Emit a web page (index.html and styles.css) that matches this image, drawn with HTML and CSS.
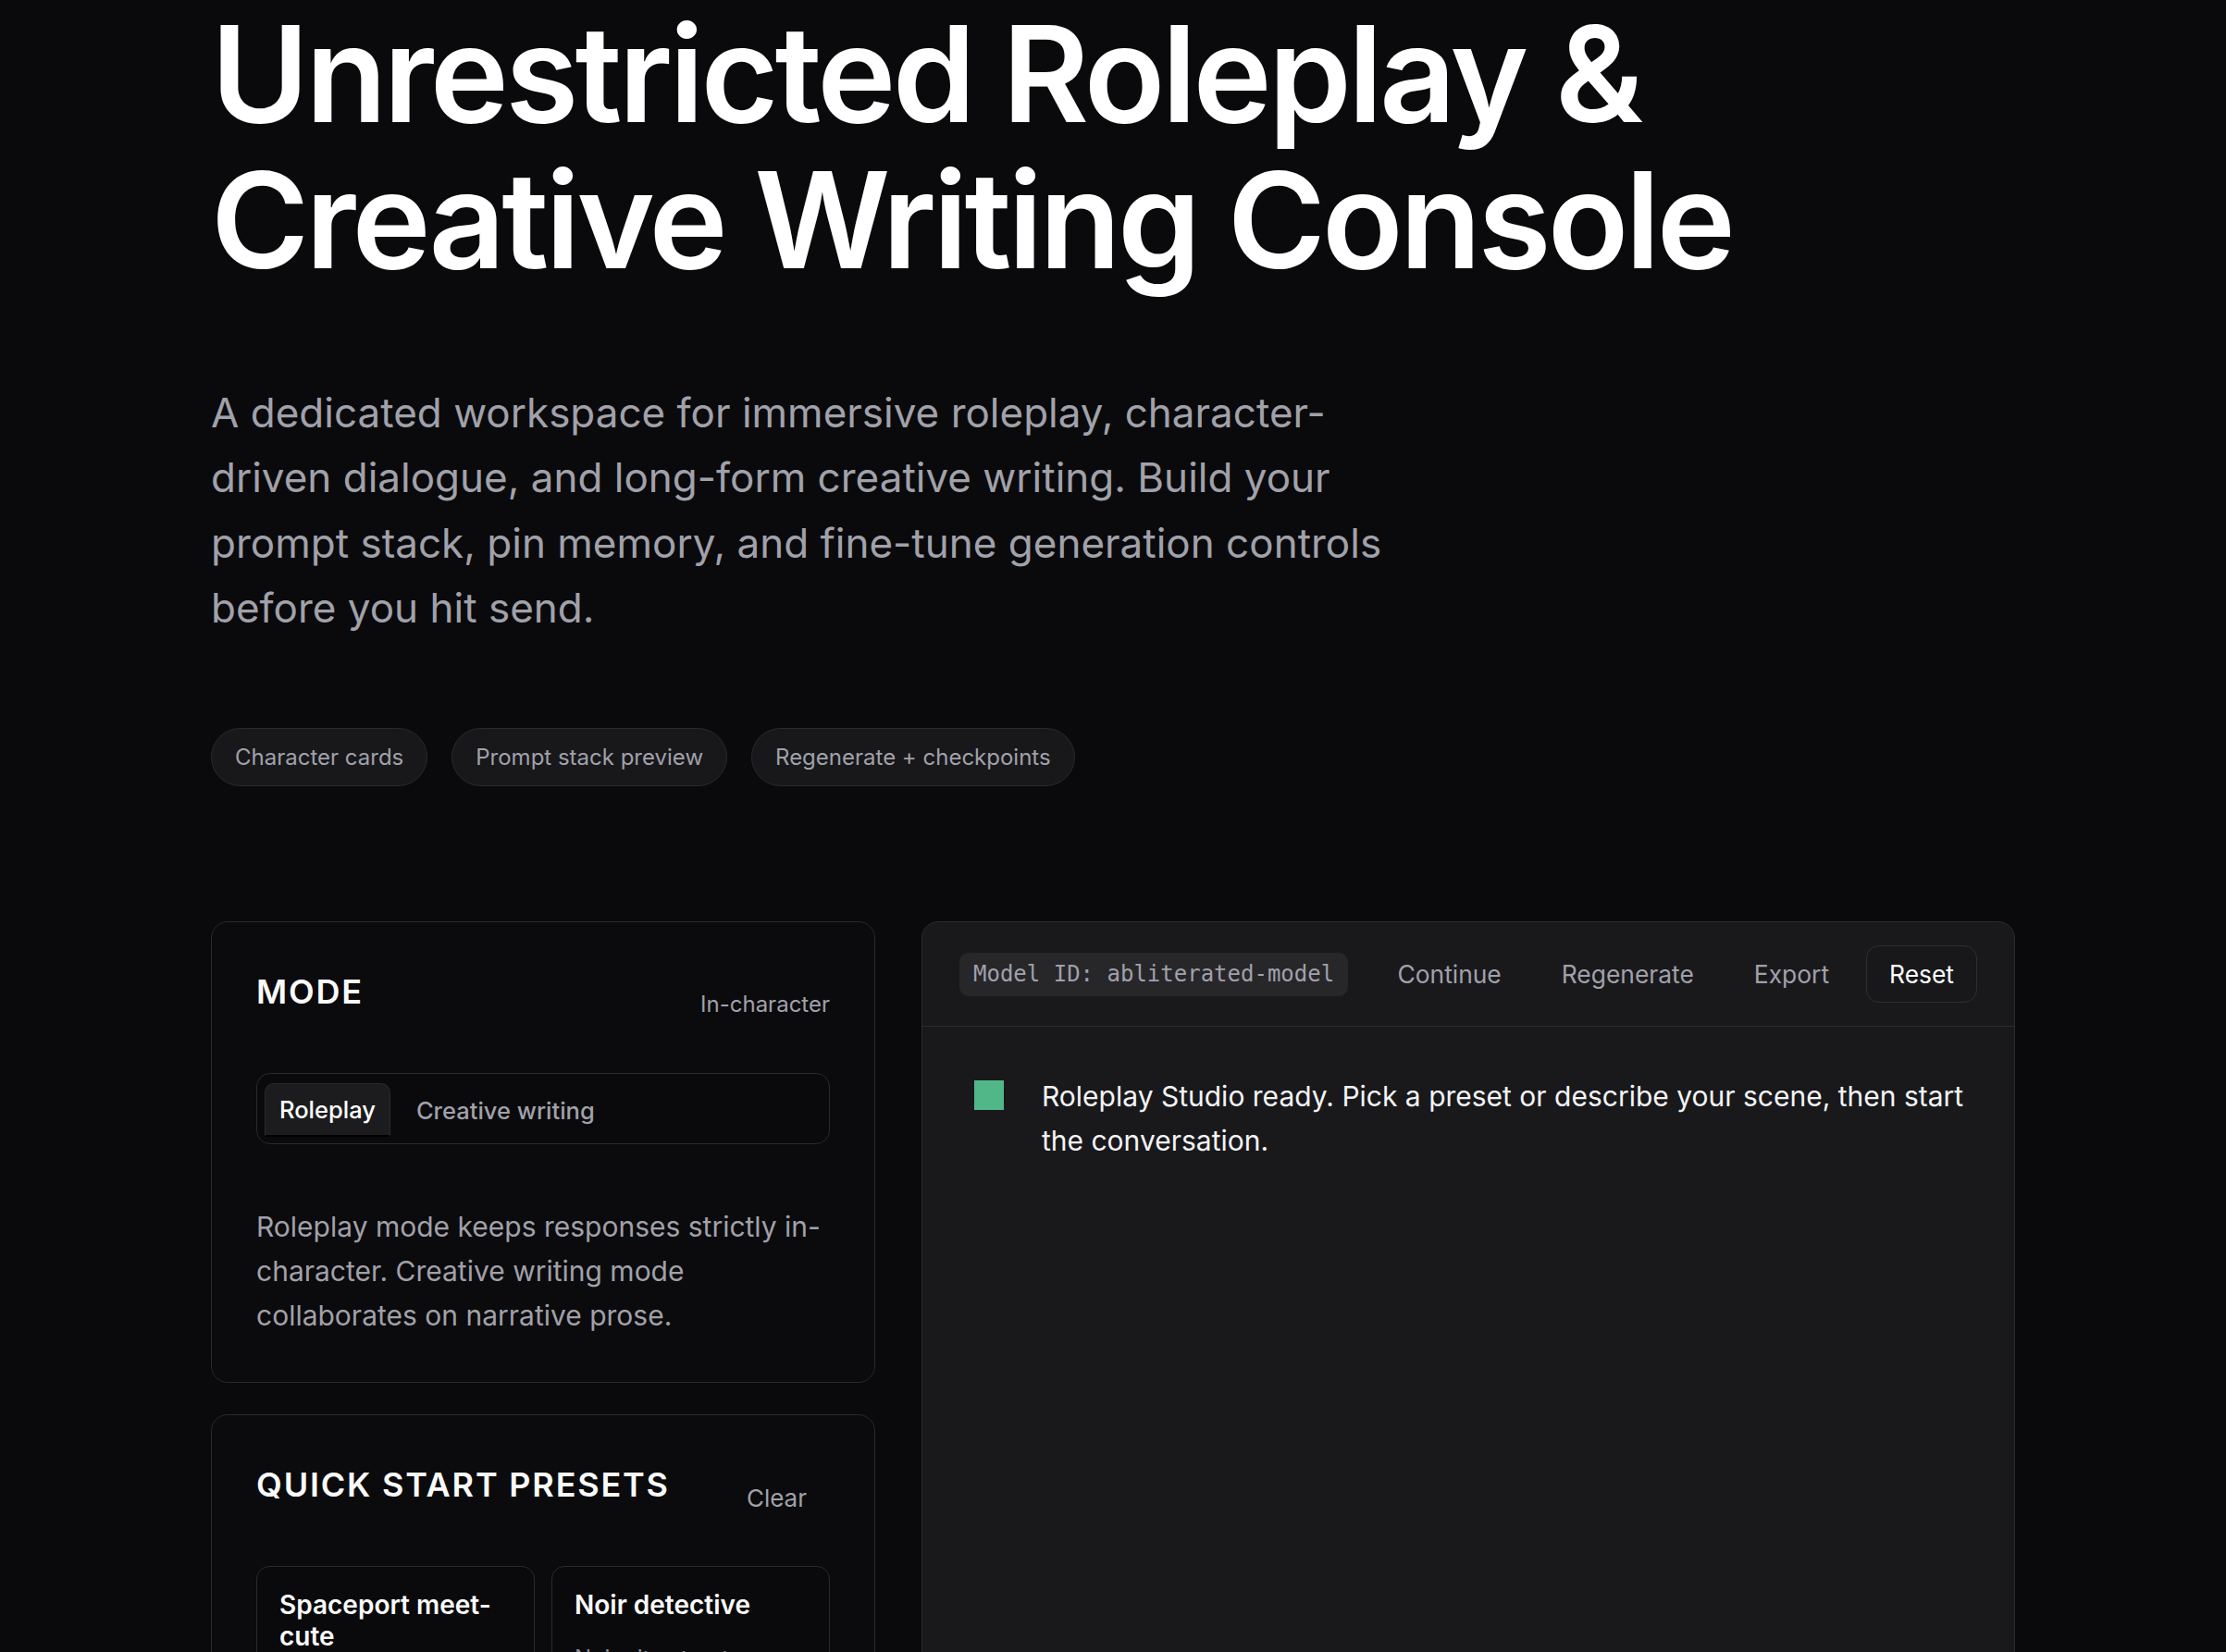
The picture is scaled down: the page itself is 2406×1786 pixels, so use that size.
FILE: index.html
```html
<!DOCTYPE html>
<html lang="en">
<head>
<meta charset="utf-8">
<title>Roleplay Studio</title>
<link rel="stylesheet" href="styles.css">
</head>
<body>
<main class="page">
  <section class="hero">
    <h1 class="hero-title">Unrestricted Roleplay &amp; Creative Writing Console</h1>
    <p class="hero-lead">A dedicated workspace for immersive roleplay, character-driven dialogue, and long-form creative writing. Build your prompt stack, pin memory, and fine-tune generation controls before you hit send.</p>
    <ul class="chips">
      <li class="chip">Character cards</li>
      <li class="chip">Prompt stack preview</li>
      <li class="chip">Regenerate + checkpoints</li>
    </ul>
  </section>

  <section class="workspace">
    <aside class="sidebar">
      <div class="panel">
        <div class="panel-head">
          <h2 class="panel-title">Mode</h2>
          <span class="panel-meta">In-character</span>
        </div>
        <div class="segmented">
          <button class="seg-btn is-active" type="button">Roleplay</button>
          <button class="seg-btn" type="button">Creative writing</button>
        </div>
        <p class="panel-desc">Roleplay mode keeps responses strictly in-character. Creative writing mode collaborates on narrative prose.</p>
      </div>

      <div class="panel">
        <div class="panel-head">
          <h2 class="panel-title">Quick start presets</h2>
          <button class="ghost-btn" type="button">Clear</button>
        </div>
        <div class="presets">
          <div class="preset">
            <h3 class="preset-title">Spaceport meet-cute</h3>
            <p class="preset-desc">Two strangers cross paths in a busy orbital terminal.</p>
          </div>
          <div class="preset">
            <h3 class="preset-title">Noir detective</h3>
            <p class="preset-desc">Noir city streets, a rain-soaked case file.</p>
          </div>
        </div>
      </div>
    </aside>

    <div class="console">
      <div class="toolbar">
        <code class="model-id">Model ID: abliterated-model</code>
        <div class="actions">
          <button class="tool-btn" type="button">Continue</button>
          <button class="tool-btn" type="button">Regenerate</button>
          <button class="tool-btn" type="button">Export</button>
          <button class="tool-btn is-outlined" type="button">Reset</button>
        </div>
      </div>
      <div class="messages">
        <div class="message">
          <span class="status-dot"></span>
          <p class="message-text">Roleplay Studio ready. Pick a preset or describe your scene, then start the conversation.</p>
        </div>
      </div>
    </div>
  </section>
</main>
</body>
</html>
```

FILE: styles.css
```css
* { box-sizing: border-box; }

html, body {
  margin: 0;
  padding: 0;
  background: #0a0a0c;
  color: #fafafa;
  font-family: Inter, "Noto Sans", "Liberation Sans", sans-serif;
}

.page {
  max-width: 1950px;
  margin: 0 auto;
  padding: 1px 0 80px;
}

/* Hero */
.hero-title {
  margin: 0;
  font-size: 144px;
  line-height: 1.1;
  font-weight: 600;
  letter-spacing: -0.026em;
  color: #ffffff;
}

.hero-lead {
  margin: 93px 0 0;
  max-width: 1300px;
  font-size: 44px;
  line-height: 1.6;
  color: #a1a1aa;
}

.chips {
  display: flex;
  gap: 26px;
  list-style: none;
  margin: 95px 0 0;
  padding: 0;
}

.chip {
  padding: 12.5px 25px;
  border: 1px solid #2a2a2e;
  border-radius: 999px;
  background: #18181b;
  color: #a1a1aa;
  font-size: 24px;
  line-height: 36px;
}

/* Workspace */
.workspace {
  display: grid;
  grid-template-columns: 718px 1fr;
  gap: 50px;
  margin-top: 146px;
  align-items: start;
}

.sidebar {
  display: flex;
  flex-direction: column;
  gap: 34.5px;
}

.panel {
  border: 1px solid #2a2a2e;
  border-radius: 18px;
  background: #0b0b0d;
  padding: 48px;
}

.panel-head {
  display: flex;
  justify-content: space-between;
  align-items: flex-start;
  height: 54px;
  margin-bottom: 61px;
}

.panel-title {
  margin: 0;
  font-size: 36px;
  line-height: 54px;
  font-weight: 600;
  letter-spacing: 0.05em;
  text-transform: uppercase;
  color: #fafafa;
}

.panel-meta {
  margin-top: 29px;
  font-size: 24px;
  line-height: 24px;
  color: #a1a1aa;
}

.ghost-btn {
  margin-top: 29px;
  padding: 0 25px;
  border: 0;
  background: transparent;
  color: #a1a1aa;
  font: inherit;
  font-size: 26px;
  line-height: 26px;
}

.segmented {
  display: flex;
  gap: 12px;
  padding: 10px 8px 7px;
  border: 1px solid #2a2a2e;
  border-radius: 15px;
  background: #0a0a0c;
}

.seg-btn {
  height: 58px;
  padding: 0 15px;
  border: 1px solid transparent;
  border-radius: 10px;
  background: transparent;
  color: #a1a1aa;
  font: inherit;
  font-size: 25.5px;
  font-weight: 500;
}

.seg-btn.is-active {
  background: #1c1c1f;
  border-color: #2a2a2e;
  border-bottom: 2px solid #000;
  border-radius: 10px 10px 2px 2px;
  color: #ffffff;
}

.panel-desc {
  margin: 64.5px 0 0;
  font-size: 30px;
  line-height: 48px;
  color: #a1a1aa;
}

.presets {
  display: grid;
  grid-template-columns: 1fr 1fr;
  gap: 18px;
}

.preset {
  border: 1px solid #2a2a2e;
  border-radius: 14px;
  padding: 25px 24px 24px;
  background: #0a0a0c;
}

.preset-title {
  margin: 0;
  font-size: 28px;
  line-height: 33.6px;
  font-weight: 600;
  color: #fafafa;
}

.preset-desc {
  margin: 22px 0 0;
  font-size: 24px;
  line-height: 36px;
  color: #8b8b94;
}

/* Console */
.console {
  min-height: 1100px;
  border: 1px solid #2a2a2e;
  border-radius: 18px;
  background: #19191c;
}

.toolbar {
  display: flex;
  justify-content: space-between;
  align-items: center;
  padding: 25px 40px;
  border-bottom: 1px solid #2a2a2e;
}

.model-id {
  padding: 9px 15px;
  border-radius: 10px;
  background: #27272a;
  color: #a1a1aa;
  font-family: "DejaVu Sans Mono", "Liberation Mono", monospace;
  font-size: 24px;
  line-height: 29px;
}

.actions {
  display: flex;
  gap: 15px;
}

.tool-btn {
  padding: 10.5px 24px;
  border: 1px solid transparent;
  border-radius: 14px;
  background: transparent;
  color: #a1a1aa;
  font: inherit;
  font-size: 26.4px;
  line-height: 39px;
}

.tool-btn.is-outlined {
  border-color: #2f2f33;
  background: #18181b;
  color: #ffffff;
}

.messages {
  padding: 51px 40px 48px 56px;
}

.message {
  display: flex;
  align-items: flex-start;
  gap: 41px;
}

.status-dot {
  flex: none;
  width: 32px;
  height: 32px;
  margin-top: 7px;
  background: #52b788;
}

.message-text {
  margin: 0;
  font-size: 30px;
  line-height: 48px;
  color: #f4f4f5;
}
```
